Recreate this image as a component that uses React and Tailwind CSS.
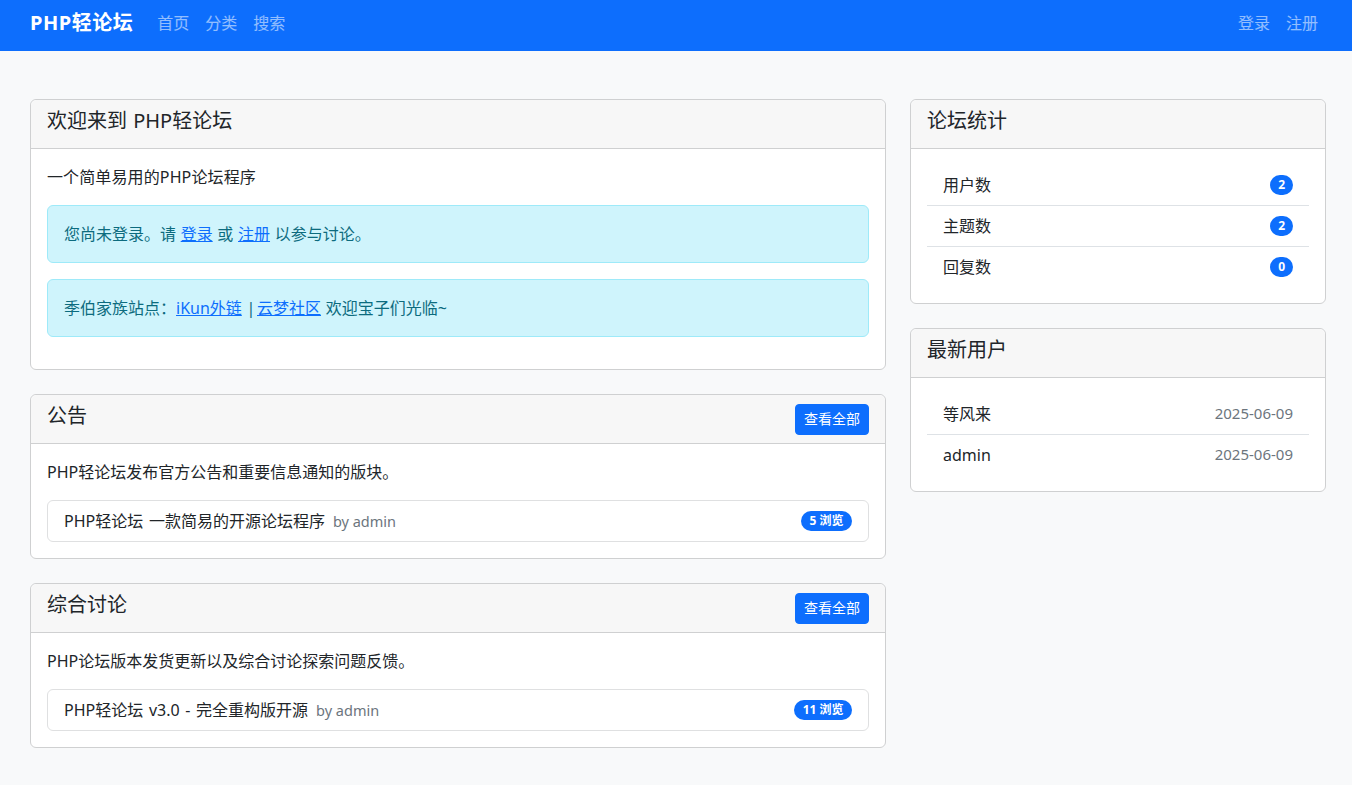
const font = "font-['Noto_Sans','Noto_Sans_CJK_SC',sans-serif]";

function Card({ title, action, children }) {
  return (
    <div className="mb-6 rounded-md border border-[#cfd0d1] bg-white">
      <div className="flex h-[49px] items-start justify-between rounded-t-md border-b border-[#cfd0d1] bg-[#f7f7f7] px-4 pt-[9px]">
        <h5 className="text-xl leading-6 font-normal text-[#212529] [word-spacing:1px]">{title}</h5>
        {action && (
          <a className="rounded border border-[#0d6efd] bg-[#0d6efd] px-2 pt-[3px] pb-[5px] text-sm leading-[21px] text-white" href="#">
            查看全部
          </a>
        )}
      </div>
      <div className="p-4">{children}</div>
    </div>
  );
}

function Alert({ children }) {
  return (
    <div className="mb-4 rounded-md border border-[#9eeaf9] bg-[#cff4fc] p-4 text-[#0c6b7e] [word-spacing:0.5px]">
      {children}
    </div>
  );
}

function Link({ children }) {
  return <a className="text-[#0d6efd] underline" href="#">{children}</a>;
}

function Board({ title, desc, topic, views }) {
  return (
    <Card title={title} action>
      <p className="mb-4 text-[#212529]">{desc}</p>
      <div className="flex h-[42px] items-center justify-between rounded-md border border-[#dfe0e1] px-4">
        <div>
          <span className="text-[#212529] [word-spacing:1.5px]">{topic}</span>
          <span className="ml-2 text-[14.5px] text-[#6c757d]">by admin</span>
        </div>
        <span className="rounded-full bg-[#0d6efd] px-[8.5px] py-[3px] text-xs leading-[14px] font-bold text-white">
          {views} 浏览
        </span>
      </div>
    </Card>
  );
}

function Row({ last, children }) {
  return (
    <div className={last ? "flex h-10 items-center justify-between px-4" : "flex h-[41px] items-center justify-between border-b border-[#dee2e6] px-4"}>
      {children}
    </div>
  );
}

function Count({ n }) {
  return (
    <span className="rounded-full bg-[#0d6efd] px-[8px] py-[3px] text-xs leading-[14px] font-bold text-white">{n}</span>
  );
}

export default function App() {
  return (
    <div className={`min-h-[785px] bg-[#f8f9fa] text-base leading-6 text-[#212529] ${font}`}>
      <nav className="flex h-[51px] items-center justify-between bg-[#0d6efd] pr-[34px] pb-[6px] pl-[30px]">
        <div className="flex items-center">
          <a className="mr-4 text-xl font-bold tracking-[0.5px] text-white" href="#">PHP轻论坛</a>
          <div className="ml-2 flex gap-4 text-white/55">
            <a href="#">首页</a>
            <a href="#">分类</a>
            <a href="#">搜索</a>
          </div>
        </div>
        <div className="flex gap-4 text-white/55">
          <a href="#">登录</a>
          <a href="#">注册</a>
        </div>
      </nav>

      <div className="flex gap-6 pt-12 pl-[30px]">
        <div className="w-[856px] shrink-0">
          <Card title="欢迎来到 PHP轻论坛">
            <p className="mb-4 tracking-[0.12px]">一个简单易用的PHP论坛程序</p>
            <Alert>您尚未登录。请 <Link>登录</Link> 或 <Link>注册</Link> 以参与讨论。</Alert>
            <Alert>季伯家族站点：<Link>iKun外链</Link> <span className="tracking-[-3px]">|</span> <Link>云梦社区</Link> 欢迎宝子们光临<span className="tracking-[2px]">~</span></Alert>
          </Card>
          <Board title="公告" desc="PHP轻论坛发布官方公告和重要信息通知的版块。" topic="PHP轻论坛 一款简易的开源论坛程序" views={5} />
          <Board title="综合讨论" desc="PHP论坛版本发货更新以及综合讨论探索问题反馈。" topic="PHP轻论坛 v3.0 - 完全重构版开源" views={11} />
        </div>

        <div className="w-[416px] shrink-0">
          <Card title="论坛统计">
            <Row><span>用户数</span><Count n={2} /></Row>
            <Row><span>主题数</span><Count n={2} /></Row>
            <Row last><span>回复数</span><Count n={0} /></Row>
          </Card>
          <Card title="最新用户">
            <Row><span>等风来</span><span className="mb-[2px] text-[15px] text-[#6c757d]">2025-06-09</span></Row>
            <Row last><span>admin</span><span className="mb-[2px] text-[15px] text-[#6c757d]">2025-06-09</span></Row>
          </Card>
        </div>
      </div>
    </div>
  );
}
